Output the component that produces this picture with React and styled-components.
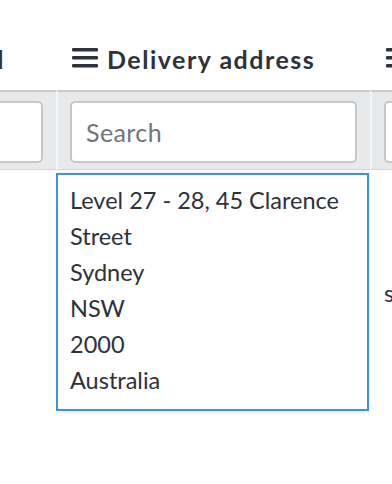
import React from "react";
import styled, { createGlobalStyle } from "styled-components";

const Global = createGlobalStyle`
  html, body { margin: 0; padding: 0; background: #ffffff; }
  body { font-family: Lato, "Liberation Sans", sans-serif; color: #2d323b; }
  * { box-sizing: border-box; }
`;

const Viewport = styled.div`
  width: 392px;
  height: 484px;
  overflow: hidden;
  background: #fff;
`;

const Table = styled.div`
  display: grid;
  grid-template-columns: 200px 314px 200px;
  grid-template-rows: 90px 80px 245px;
  margin-left: -144px;
`;

const HeaderCell = styled.div`
  display: flex;
  align-items: flex-end;
  justify-content: ${(p) => (p.$end ? "flex-end" : "flex-start")};
  gap: 9px;
  padding: 0 ${(p) => (p.$end ? "51px" : "14px")} 17px ${(p) => (p.$end ? "0" : "16px")};
  overflow: hidden;
  white-space: nowrap;
`;

const HeaderText = styled.span`
  font-size: 25px;
  font-weight: 700;
  letter-spacing: 1.5px;
  line-height: 28px;
  color: #2d323b;
`;

const MenuIcon = styled.svg`
  flex: 0 0 auto;
  width: 26px;
  height: 20px;
  margin-bottom: 5px;
`;

const FilterCell = styled.div`
  background: #e8e9eb;
  border-top: 2px solid #cacbcd;
  border-bottom: 1px solid #d5d6d8;
  border-left: ${(p) => (p.$sep ? "2px solid #f4f5f6" : "none")};
  padding: 9px ${(p) => (p.$last ? "0" : "13px")} 6px 12px;
  display: flex;
  overflow: hidden;
`;

const SearchInput = styled.input`
  width: 100%;
  height: 62px;
  border: 2px solid #c6c7c9;
  border-radius: 5px;
  background: #fff;
  padding: 0 14px;
  font-family: Lato, "Liberation Sans", sans-serif;
  font-size: 25px;
  letter-spacing: 0.4px;
  color: #2d323b;
  outline: none;
  &::placeholder { color: #70757c; }
`;

const BodyCell = styled.div`
  display: flex;
  align-items: ${(p) => (p.$center ? "center" : "stretch")};
  padding: ${(p) => (p.$center ? "0 14px" : "3px 0 4px 0")};
  font-size: 23.5px;
  color: #2d323b;
  overflow: hidden;
  white-space: ${(p) => (p.$center ? "nowrap" : "normal")};
`;

const Editor = styled.div`
  flex: 1;
  border: 2px solid #3f8fe2;
  box-shadow: 0 0 8px rgba(63, 143, 226, 0.18);
  padding: 7px 12px 10px 12px;
  font-size: 23.5px;
  line-height: 36px;
  color: #2d323b;
  margin-right: 1px;
`;

const Line = styled.div``;

function Hamburger() {
  return (
    <MenuIcon viewBox="0 0 26 20">
      <rect x="0" y="0" width="26" height="3.4" rx="1.2" fill="#2d323b" />
      <rect x="0" y="8" width="26" height="3.4" rx="1.2" fill="#2d323b" />
      <rect x="0" y="16" width="26" height="3.4" rx="1.2" fill="#2d323b" />
    </MenuIcon>
  );
}

export default function App() {
  return (
    <>
      <Global />
      <Viewport>
        <Table>
          <HeaderCell $end>
            <HeaderText>Ordered</HeaderText>
          </HeaderCell>
          <HeaderCell>
            <Hamburger />
            <HeaderText>Delivery address</HeaderText>
          </HeaderCell>
          <HeaderCell>
            <Hamburger />
            <HeaderText>Status</HeaderText>
          </HeaderCell>

          <FilterCell>
            <SearchInput aria-label="Search ordered" />
          </FilterCell>
          <FilterCell $sep>
            <SearchInput placeholder="Search" />
          </FilterCell>
          <FilterCell $sep $last>
            <SearchInput placeholder="Search" />
          </FilterCell>

          <BodyCell $center />
          <BodyCell>
            <Editor>
              <Line>Level 27 - 28, 45 Clarence Street</Line>
              <Line>Sydney</Line>
              <Line>NSW</Line>
              <Line>2000</Line>
              <Line>Australia</Line>
            </Editor>
          </BodyCell>
          <BodyCell $center>shipped</BodyCell>
        </Table>
      </Viewport>
    </>
  );
}
